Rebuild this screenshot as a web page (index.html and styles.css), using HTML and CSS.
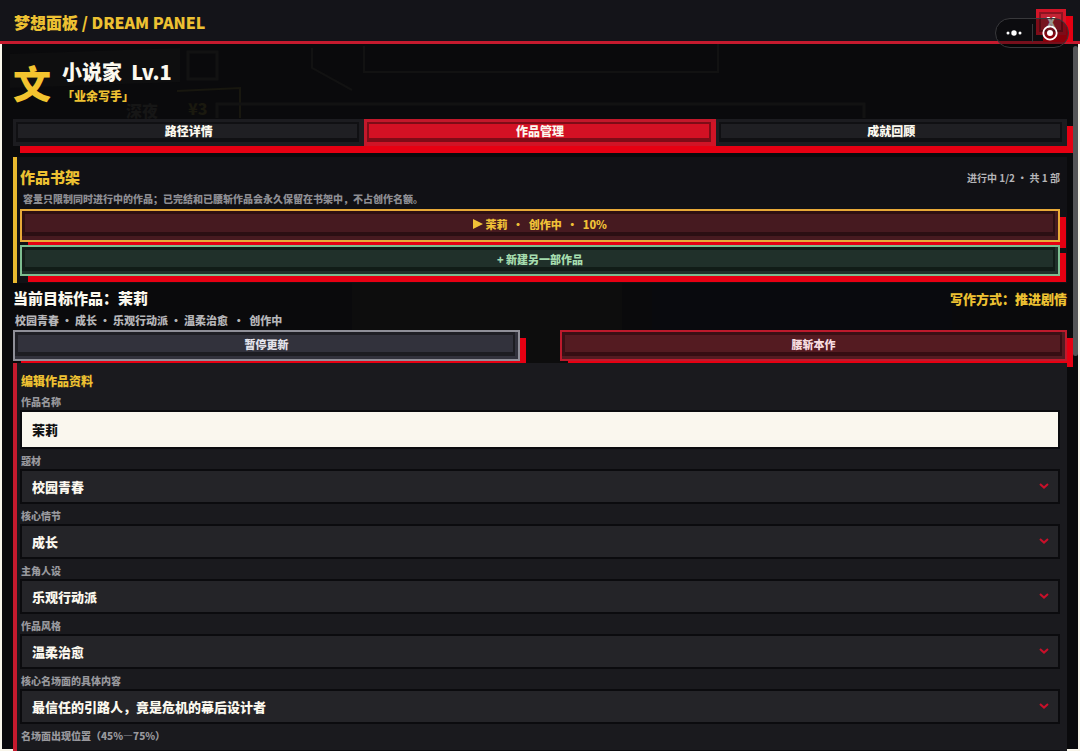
FILE: index.html
```html
<!DOCTYPE html>
<html lang="zh-Hans">
<head>
    <meta charset="UTF-8">
    <meta name="viewport" content="width=device-width, initial-scale=1.0">
    <title>梦想面板</title>
    <link rel="stylesheet" href="styles.css">
</head>
<body>
<header class="topbar">
    <h1>梦想面板 / DREAM PANEL</h1>
    <button class="close-btn" type="button">X</button>
</header>
<div class="capsule">
    <button type="button" aria-label="更多">
        <svg width="16" height="8" viewBox="0 0 16 8"><circle cx="2" cy="4" r="1.5"/><circle cx="8" cy="4" r="2.7"/><circle cx="14" cy="4" r="1.5"/></svg>
    </button>
    <span class="capsule-line"></span>
    <button type="button" aria-label="退出">
        <svg width="18" height="18" viewBox="0 0 18 18"><circle cx="9" cy="9" r="6.7" fill="none" stroke="#fff" stroke-width="1.8"/><circle cx="9" cy="9" r="3"/></svg>
    </button>
</div>

<main class="panel">
    <!-- dimmed game screen behind the panel -->
    <div class="backdrop" aria-hidden="true">
        <svg width="1076" height="340" fill="none" stroke="#121212" stroke-width="3">
            <path d="M8 10 L178 4 V38 L8 44 Z" fill="#0e0e0f" stroke="none"/>
            <rect x="186" y="8" width="29" height="27"/>
            <path d="M175 47 L238 44 V74" stroke="#18170f" stroke-width="2"/>
            <path d="M215 74 V60 H862 V74"/>
            <path d="M362 2 V28 H716 V0 M310 4 V24 L350 46" stroke-width="2"/>
            <rect x="350" y="238" width="270" height="90" fill="#0d0d0d" stroke="none"/>
            <rect x="650" y="238" width="300" height="90" fill="#090a0e" stroke="none"/>
        </svg>
        <span class="ghost ghost-a">深夜</span>
        <span class="ghost ghost-b">¥3</span>
    </div>

    <section class="hero">
        <span class="hero-icon">文</span>
        <div>
            <h2>小说家&nbsp; Lv.1</h2>
            <p>「业余写手」</p>
        </div>
    </section>

    <nav class="tabs">
        <button class="btn tab" type="button">路径详情</button>
        <button class="btn tab active" type="button">作品管理</button>
        <button class="btn tab" type="button">成就回顾</button>
    </nav>

    <section class="shelf">
        <div class="shelf-head">
            <h3>作品书架</h3>
            <span>进行中 1/2 ・ 共 1 部</span>
        </div>
        <p class="shelf-tip">容量只限制同时进行中的作品；已完结和已腰斩作品会永久保留在书架中，不占创作名额。</p>
        <button class="btn book" type="button"><svg width="10" height="10" viewBox="0 0 10 10"><path d="M0 0 L10 5 L0 10 Z"/></svg> 茉莉 &nbsp;•&nbsp; 创作中 &nbsp;•&nbsp; 10%</button>
        <button class="btn new-book" type="button">+ 新建另一部作品</button>
    </section>

    <section class="current">
        <div class="current-head">
            <h3>当前目标作品：茉莉</h3>
            <span>写作方式：推进剧情</span>
        </div>
        <p class="current-meta">校园青春 • 成长 • 乐观行动派 • 温柔治愈 &nbsp;•&nbsp; 创作中</p>
        <div class="actions">
            <button class="btn pause" type="button">暂停更新</button>
            <button class="btn drop" type="button">腰斩本作</button>
        </div>
    </section>

    <form class="edit">
        <h4>编辑作品资料</h4>
        <label for="title">作品名称</label>
        <input type="text" id="title" value="茉莉">
        <label for="genre">题材</label>
        <div class="select">
            <select id="genre"><option>校园青春</option></select>
            <svg width="10" height="6" viewBox="0 0 10 6"><path d="M1 1 L5 4.6 L9 1"/></svg>
        </div>
        <label for="plot">核心情节</label>
        <div class="select">
            <select id="plot"><option>成长</option></select>
            <svg width="10" height="6" viewBox="0 0 10 6"><path d="M1 1 L5 4.6 L9 1"/></svg>
        </div>
        <label for="hero">主角人设</label>
        <div class="select">
            <select id="hero"><option>乐观行动派</option></select>
            <svg width="10" height="6" viewBox="0 0 10 6"><path d="M1 1 L5 4.6 L9 1"/></svg>
        </div>
        <label for="style">作品风格</label>
        <div class="select">
            <select id="style"><option>温柔治愈</option></select>
            <svg width="10" height="6" viewBox="0 0 10 6"><path d="M1 1 L5 4.6 L9 1"/></svg>
        </div>
        <label for="scene">核心名场面的具体内容</label>
        <div class="select">
            <select id="scene"><option>最信任的引路人，竟是危机的幕后设计者</option></select>
            <svg width="10" height="6" viewBox="0 0 10 6"><path d="M1 1 L5 4.6 L9 1"/></svg>
        </div>
        <label for="position">名场面出现位置（45%—75%）</label>
        <input class="position" type="range" id="position" min="45" max="75">
    </form>
    <div class="scrollbar"></div>
</main>
</body>
</html>
```
FILE: styles.css
```css
* {
    box-sizing: border-box;
}
body {
    margin: 0;
    height: 100vh;
    display: flex;
    flex-direction: column;
    overflow: hidden;
    background: #f8f5ea;
    color: #fbf8ee;
    font-family: "Noto Sans CJK SC", "Noto Sans", sans-serif;
    font-weight: 900;
}
h1, h2, h3, h4, p {
    margin: 0;
    font-weight: 900;
}
button, input, select {
    font: inherit;
    color: inherit;
}
button {
    cursor: pointer;
}

/* top bar */
.topbar {
    position: relative;
    z-index: 1;
    height: 44px;
    flex: none;
    display: flex;
    align-items: center;
    justify-content: space-between;
    padding: 0 14px;
    background: #141419;
    border-bottom: 3px solid #c51a2e;
}
.topbar h1 {
    font-size: 16px;
    line-height: 24px;
    color: #edc132;
    padding-top: 2px;
}
.close-btn {
    width: 30px;
    height: 26px;
    margin-top: 2px;
    padding: 0;
    border: 3px solid #d31528;
    background: #c32334;
    box-shadow: inset 0 0 0 2px #8c1421, 7px 7px 0 #e60012;
    font-size: 14px;
    line-height: 20px;
}
.capsule {
    position: absolute;
    z-index: 2;
    top: 18px;
    right: 11px;
    width: 74px;
    height: 30px;
    display: flex;
    align-items: center;
    border: 1px solid #38383b;
    border-radius: 15px;
    background: rgba(0, 0, 0, 0.4);
}
.capsule button {
    flex: 1;
    display: flex;
    justify-content: center;
    padding: 0;
    border: 0;
    background: none;
}
.capsule svg {
    fill: #fff;
}
.capsule-line {
    width: 1px;
    height: 18px;
    background: #38383b;
}

/* panel */
.panel {
    position: relative;
    flex: 1;
    min-height: 0;
    margin: 0 2px;
    padding: 0 11px;
    overflow: hidden;
    background: linear-gradient(to top, #f8f5ea 2px, #0a0a0c 2px);
}
.backdrop {
    position: absolute;
    top: 0;
    left: 0;
}
.ghost {
    position: absolute;
    color: #161616;
    font-size: 16px;
    line-height: 20px;
}
.ghost-a {
    top: 56px;
    left: 124px;
}
.ghost-b {
    top: 54px;
    left: 186px;
    color: #1a190f;
}
.scrollbar {
    position: absolute;
    top: 2px;
    right: 0;
    width: 5px;
    height: 310px;
    border-radius: 3px;
    background: #555557;
}

.hero {
    position: relative;
    display: flex;
    align-items: center;
    gap: 11px;
    height: 75px;
}
.hero-icon {
    font-size: 38px;
    line-height: 38px;
    color: #f3c42f;
}
.hero h2 {
    font-size: 20px;
    line-height: 28px;
}
.hero p {
    font-size: 12px;
    line-height: 20px;
    color: #edc132;
}

/* buttons */
.btn {
    display: block;
    width: 100%;
    padding: 0;
    text-align: center;
}
.tabs {
    position: relative;
    display: flex;
    box-shadow: 7px 7px 0 #e60012;
}
.tab {
    flex: 1;
    height: 27px;
    border: 0;
    background: #1f1f23;
    box-shadow: inset 3px 3px 0 #1c1c20, inset -5px -4px 0 #1c1c20, inset 5px 5px 0 #101013, inset -7px -8px 0 #101013;
    font-size: 12px;
    line-height: 24px;
    padding-bottom: 3px;
}
.tab.active {
    background: #d31124;
    box-shadow: inset 3px 3px 0 #c3182b, inset -5px -4px 0 #d01426, inset 5px 5px 0 #7e0c17, inset -7px -8px 0 #7e0c17;
}

.shelf {
    position: relative;
    margin-top: 11px;
    padding: 8px 7px 7px 3px;
    border-left: 4px solid #e9b92f;
    background: #111115;
}
.shelf-head,
.current-head {
    display: flex;
    align-items: center;
    justify-content: space-between;
}
.shelf-head h3 {
    font-size: 15px;
    line-height: 24px;
    color: #edc132;
}
.shelf-head span {
    font-size: 10px;
    font-weight: 700;
    color: #b5b5b8;
}
.shelf-tip {
    padding-left: 3px;
    font-size: 10px;
    line-height: 20px;
    color: #8d8d92;
}
.book,
.new-book,
.pause,
.drop {
    height: 31px;
    border: 2px solid;
    font-size: 11px;
    line-height: 20px;
    padding-bottom: 4px;
}
.book {
    height: 33px;
    border-color: #e8aa38;
    background: #461a20;
    box-shadow: inset 0 -4px 0 #461a20, inset -3px 0 0 #461a20, inset 3px 3px 0 #2e1012, inset -5px -8px 0 #2b0f13, 7px 7px 0 -1px #e60012;
    color: #f0c137;
}
.book svg {
    fill: #f0c137;
}
.new-book {
    margin-top: 3px;
    border-color: #7dbd90;
    background: #20302a;
    box-shadow: inset 0 -3px 0 #20302a, inset -3px 0 0 #20302a, inset 3px 3px 0 #131d19, inset -5px -7px 0 #111c17, 7px 7px 0 -1px #e60012;
    color: #a5dcae;
}

.current {
    padding-top: 3px;
}
.current-head h3 {
    position: relative;
    font-size: 15px;
    line-height: 24px;
}
.current-head span {
    position: relative;
    font-size: 13px;
    color: #edc132;
}
.current-meta {
    position: relative;
    padding-left: 2px;
    font-size: 11px;
    line-height: 20px;
    color: #b5b5b8;
}
.actions {
    position: relative;
    display: grid;
    grid-template-columns: 1fr 1fr;
    gap: 40px;
}
.pause {
    border-color: #8f8f98;
    background: #32323c;
    box-shadow: inset 0 -3px 0 #32323c, inset -3px 0 0 #32323c, inset 3px 3px 0 #1f1f25, inset -5px -7px 0 #1d1d22, 7px 7px 0 -1px #e60012;
    color: #e2e2ea;
}
.drop {
    border-color: #bd1a2c;
    background: #541b21;
    box-shadow: inset 0 -3px 0 #541b21, inset -3px 0 0 #541b21, inset 3px 3px 0 #3a1015, inset -5px -7px 0 #360d12, 7px 7px 0 -1px #e60012;
    color: #f7dde0;
}

/* edit form */
.edit {
    position: relative;
    margin-top: 2px;
    padding: 9px 7px 0 3px;
    border-left: 4px solid #c51a2e;
    background: #1a1a1e;
}
.edit h4 {
    padding-left: 1px;
    font-size: 12px;
    line-height: 18px;
    color: #edc132;
}
.edit label {
    display: block;
    margin-top: 4px;
    padding-left: 1px;
    font-size: 10px;
    line-height: 16px;
    color: #98989d;
}
.edit input,
.edit select {
    display: block;
    width: 100%;
    height: 35px;
    padding: 0 10px 1px;
    border: 2px solid #0b0b0e;
    border-radius: 0;
    background: #242428;
    font-size: 13px;
    appearance: none;
}
.edit input {
    height: 39px;
    background: #faf7ee;
    color: #111;
}
.edit .position {
    margin: 6px 0 0;
    background: #242428;
}
.select {
    position: relative;
}
.select svg {
    position: absolute;
    top: 14px;
    right: 11px;
    fill: none;
    stroke: #c8102a;
    stroke-width: 2;
    pointer-events: none;
}
```
